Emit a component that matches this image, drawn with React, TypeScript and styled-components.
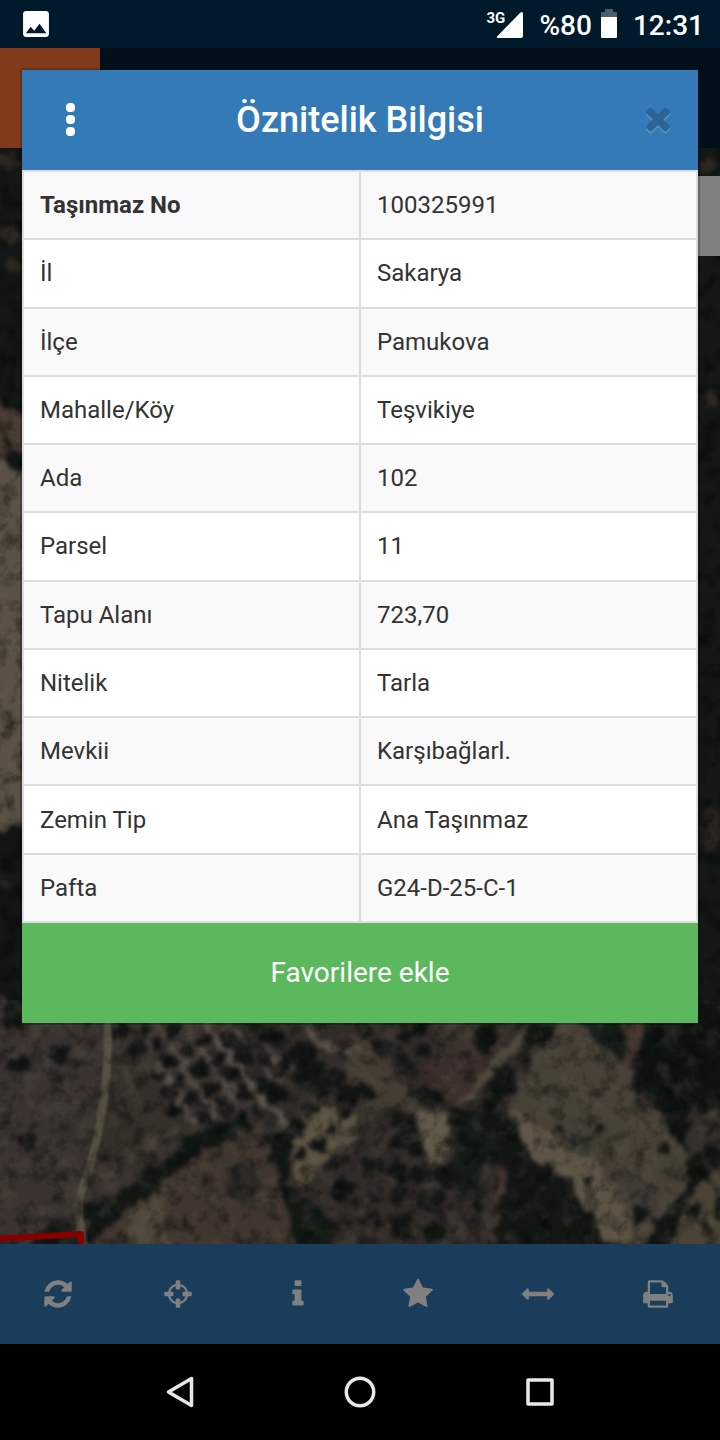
import React from 'react';
import styled, { createGlobalStyle } from 'styled-components';

const GlobalStyle = createGlobalStyle`
  *, *::before, *::after { box-sizing: border-box; }
  body { margin: 0; background: #000; font-family: Roboto, "Noto Sans", sans-serif; color: #333; }
  button { font: inherit; border: 0; padding: 0; background: none; cursor: pointer; }
`;

const Page = styled.div`
  min-height: 100vh;
  display: flex;
  flex-direction: column;
`;

/* ---------- status bar ---------- */

const StatusBar = styled.header`
  height: 48px;
  padding: 0 16px 0 20px;
  display: flex;
  align-items: center;
  justify-content: space-between;
  background: #00192b;
  color: #fff;
`;

const StatusGroup = styled.div`
  display: flex;
  align-items: center;
`;

const StatusText = styled.span`
  font-size: 28px;
  line-height: 32px;
  font-weight: 500;
  padding-top: 3px;
`;

const SignalBox = styled.div`
  position: relative;
  width: 36px;
  height: 28px;
  margin-right: 17px;
  display: flex;
  justify-content: flex-end;
  align-items: flex-end;
`;

const NetworkLabel = styled.span`
  position: absolute;
  left: 0;
  top: 0;
  font-size: 15px;
  line-height: 16px;
  font-weight: 700;
`;

const BatteryIcon = styled.svg`
  margin: 0 16px 2px 9px;
`;

/* ---------- application ---------- */

const Stage = styled.div`
  flex: 1;
  display: grid;
  grid-template-columns: minmax(0, 1fr);
`;

const AppShell = styled.div`
  grid-area: 1 / 1;
  display: flex;
  flex-direction: column;
`;

const AppHeader = styled.div`
  height: 100px;
  background: #000f1a;
`;

const HeaderTile = styled.div`
  width: 100px;
  height: 100px;
  background: #823b1a;
`;

const MapArea = styled.main`
  position: relative;
  flex: 1;
  overflow: hidden;
  background: #141715;
`;

const MapArt = styled.svg`
  position: absolute;
  inset: 0;
  width: 100%;
  height: 100%;
`;

const MapControl = styled.button`
  position: absolute;
  right: 0;
  top: 28px;
  width: 80px;
  height: 80px;
  background: #808080;
`;

const Toolbar = styled.nav`
  height: 100px;
  display: grid;
  grid-template-columns: repeat(6, 1fr);
  background: #1a3d5b;
`;

const ToolButton = styled.button`
  display: flex;
  align-items: center;
  justify-content: center;
  padding-right: 4px;
  color: #808080;
`;

/* ---------- dialog ---------- */

const Dialog = styled.section`
  grid-area: 1 / 1;
  align-self: start;
  position: relative;
  margin: 20px;
  border: 2px solid rgba(0, 0, 0, 0.2);
  background: #fff;
  background-clip: padding-box;
`;

const DialogHeader = styled.header`
  height: 100px;
  padding: 0 22px;
  display: grid;
  grid-template-columns: 52px 1fr 36px;
  align-items: center;
  background: #337ab7;
  color: #fff;
`;

const HeaderButton = styled.button`
  height: 52px;
  display: flex;
  align-items: center;
  justify-content: center;
  color: inherit;
`;

const DialogTitle = styled.h1`
  margin: 0;
  padding-right: 16px;
  font-size: 36px;
  line-height: 40px;
  font-weight: 500;
  text-align: center;
`;

const DataTable = styled.table`
  width: 100%;
  height: 753px;
  table-layout: fixed;
  border-collapse: collapse;
  font-size: 24px;
  line-height: 34px;
`;

const Row = styled.tr`
  background: #fff;
  &:nth-child(odd) { background: #f9f9f9; }
`;

const Label = styled.th<{ $strong?: boolean }>`
  border: 2px solid #ddd;
  padding: 0 16px;
  text-align: left;
  font-weight: ${(p) => (p.$strong ? 700 : 400)};
`;

const Value = styled.td`
  border: 2px solid #ddd;
  padding: 0 16px;
`;

const FavoriteButton = styled.button`
  display: block;
  width: 100%;
  height: 100px;
  background: #5cb85c;
  color: #fff;
  font-size: 28px;
  line-height: 40px;
`;

/* ---------- system navigation ---------- */

const SystemNav = styled.nav`
  height: 96px;
  padding: 0 90px;
  display: grid;
  grid-template-columns: repeat(3, 1fr);
  background: #000;
`;

const SystemButton = styled.button`
  display: flex;
  align-items: center;
  justify-content: center;
`;

/* ---------- data ---------- */

const rows: [string, string][] = [
  ['Taşınmaz No', '100325991'],
  ['İl', 'Sakarya'],
  ['İlçe', 'Pamukova'],
  ['Mahalle/Köy', 'Teşvikiye'],
  ['Ada', '102'],
  ['Parsel', '11'],
  ['Tapu Alanı', '723,70'],
  ['Nitelik', 'Tarla'],
  ['Mevkii', 'Karşıbağlarl.'],
  ['Zemin Tip', 'Ana Taşınmaz'],
  ['Pafta', 'G24-D-25-C-1'],
];

const tools = [
  {
    name: 'Yenile',
    d: 'M1639 1056q0 5-1 7-64 268-268 434.500t-478 166.500q-146 0-282.500-55t-243.500-157l-129 129q-19 19-45 19t-45-19-19-45v-448q0-26 19-45t45-19h448q26 0 45 19t19 45-19 45l-137 137q71 66 161 102t187 36q134 0 250-65t186-179q11-17 53-117 8-23 30-23h192q13 0 22.500 9.500t9.500 22.500zm25-800v448q0 26-19 45t-45 19h-448q-26 0-45-19t-19-45 19-45l138-138q-148-137-349-137-134 0-250 65t-186 179q-11 17-53 117-8 23-30 23h-199q-13 0-22.500-9.500t-9.500-22.500v-7q65-268 270-434.500t480-166.500q146 0 284 55.500t245 156.500l130-129q19-19 45-19t45 19 19 45z',
  },
  {
    name: 'Konum',
    d: 'M1325 1024h-109q-26 0-45-19t-19-45v-128q0-26 19-45t45-19h109q-32-108-112.500-188.500t-188.500-112.500v109q0 26-19 45t-45 19h-128q-26 0-45-19t-19-45v-109q-108 32-188.500 112.500t-112.500 188.500h109q26 0 45 19t19 45v128q0 26-19 45t-45 19h-109q32 108 112.500 188.500t188.500 112.500v-109q0-26 19-45t45-19h128q26 0 45 19t19 45v109q108-32 188.500-112.500t112.500-188.500zm339-192v128q0 26-19 45t-45 19h-143q-37 161-154.500 278.500t-278.500 154.500v143q0 26-19 45t-45 19h-128q-26 0-45-19t-19-45v-143q-161-37-278.500-154.500t-154.500-278.500h-143q-26 0-45-19t-19-45v-128q0-26 19-45t45-19h143q37-161 154.500-278.500t278.500-154.500v-143q0-26 19-45t45-19h128q26 0 45 19t19 45v143q161 37 278.500 154.500t154.500 278.500h143q26 0 45 19t19 45z',
  },
  {
    name: 'Bilgi',
    d: 'M1216 1344v128q0 26-19 45t-45 19h-512q-26 0-45-19t-19-45v-128q0-26 19-45t45-19h64v-384h-64q-26 0-45-19t-19-45v-128q0-26 19-45t45-19h384q26 0 45 19t19 45v576h64q26 0 45 19t19 45zm-128-1152v192q0 26-19 45t-45 19h-256q-26 0-45-19t-19-45v-192q0-26 19-45t45-19h256q26 0 45 19t19 45z',
  },
  {
    name: 'Favoriler',
    d: 'M1728 647q0 22-26 48l-363 354 86 500q1 7 1 20 0 21-10.500 35.500t-30.500 14.500q-19 0-40-12l-449-236-449 236q-22 12-40 12-21 0-31.500-14.500t-10.500-35.500q0-6 2-20l86-500-364-354q-25-27-25-48 0-37 56-46l502-73 225-455q19-41 49-41t49 41l225 455 502 73q56 9 56 46z',
  },
  {
    name: 'Ölçüm',
    d: 'M1792 896q0 26-19 45l-256 256q-19 19-45 19t-45-19-19-45v-128h-1024v128q0 26-19 45t-45 19-45-19l-256-256q-19-19-19-45t19-45l256-256q19-19 45-19t45 19 19 45v128h1024v-128q0-26 19-45t45-19 45 19l256 256q19 19 19 45z',
  },
  {
    name: 'Yazdır',
    d: 'M448 1536h896v-256h-896v256zm0-640h896v-384h-160q-40 0-68-28t-28-68v-160h-640v640zm1152 64q0-26-19-45t-45-19-45 19-19 45 19 45 45 19 45-19 19-45zm128 0v416q0 13-9.500 22.500t-22.500 9.500h-224v160q0 40-28 68t-68 28h-960q-40 0-68-28t-28-68v-160h-224q-13 0-22.500-9.500t-9.500-22.500v-416q0-79 56.500-135.500t135.500-56.500h64v-544q0-40 28-68t68-28h672q40 0 88 20t76 48l152 152q28 28 48 76t20 88v256h64q79 0 135.500 56.500t56.500 135.500z',
  },
];

const closePath =
  'M1490 1322q0 40-28 68l-136 136q-28 28-68 28t-68-28l-294-294-294 294q-28 28-68 28t-68-28l-136-136q-28-28-28-68t28-68l294-294-294-294q-28-28-28-68t28-68l136-136q28-28 68-28t68 28l294 294 294-294q28-28 68-28t68 28l136 136q28 28 28 68t-28 68l-294 294 294 294q28 28 28 68z';

/* tree crowns on the aerial image: x, y, rx, ry */
const trees: number[][] = [
  [12, 1024, 11, 8], [19, 1065, 13, 11], [60, 1055, 10, 9], [29, 1141, 8, 8],
  [120, 1030, 13, 10], [137, 1048, 10, 9], [159, 1077, 7, 7], [168, 1092, 7, 6], [173, 1109, 9, 9],
  [145, 1032, 6, 7], [156, 1044, 7, 7], [168, 1062, 8, 8], [180, 1081, 7, 8], [192, 1099, 8, 8], [203, 1118, 8, 7],
  [172, 1033, 7, 8], [187, 1052, 8, 7], [199, 1070, 9, 8], [211, 1088, 8, 8], [224, 1108, 9, 9],
  [204, 1041, 8, 8], [218, 1058, 9, 7], [231, 1074, 7, 7], [243, 1093, 9, 9], [256, 1109, 5, 5],
  [228, 1038, 8, 8], [245, 1054, 9, 11], [260, 1084, 7, 7], [276, 1095, 11, 9], [283, 1062, 6, 7], [265, 1060, 8, 8],
  [262, 1034, 12, 10], [282, 1040, 10, 10], [305, 1055, 16, 14], [310, 1075, 18, 15], [337, 1080, 9, 8],
  [350, 1095, 13, 11], [325, 1092, 7, 7], [284, 1140, 11, 9], [298, 1127, 9, 9], [318, 1146, 9, 8], [330, 1129, 5, 6],
  [312, 1110, 6, 7], [302, 1156, 5, 5], [345, 1112, 4, 5], [343, 1190, 13, 11], [372, 1165, 13, 9], [330, 1165, 8, 7],
  [398, 1173, 9, 11], [420, 1175, 11, 10], [445, 1175, 12, 11], [375, 1196, 7, 8], [400, 1195, 10, 9], [432, 1200, 13, 11],
  [372, 1220, 10, 9], [403, 1228, 13, 11], [432, 1232, 14, 10], [398, 1145, 9, 7], [415, 1150, 9, 8], [405, 1125, 14, 12],
  [385, 1048, 11, 10], [398, 1058, 9, 9], [412, 1070, 9, 10], [408, 1035, 7, 7], [366, 1092, 6, 8], [367, 1028, 8, 7],
  [420, 1028, 9, 10], [424, 1050, 7, 6], [484, 1040, 12, 15], [540, 1035, 12, 11], [430, 1098, 14, 9], [456, 1115, 9, 9],
  [507, 1077, 11, 11], [499, 1090, 13, 13], [488, 1106, 7, 6], [495, 1122, 12, 14], [508, 1138, 9, 13], [510, 1158, 11, 9],
  [664, 1146, 5, 5], [696, 1165, 11, 13], [715, 1155, 8, 12], [710, 1128, 7, 8], [640, 1215, 8, 9], [663, 1222, 10, 8],
  [695, 1210, 7, 6], [709, 1230, 7, 6], [718, 1208, 6, 10], [600, 1129, 5, 4], [588, 1181, 4, 4], [555, 1086, 3, 3],
  [537, 1076, 3, 3], [528, 1070, 3, 4], [560, 1129, 4, 3],
  [4, 170, 12, 16], [16, 200, 10, 12], [4, 285, 16, 20], [18, 330, 12, 20], [4, 365, 12, 22], [16, 460, 12, 10],
  [4, 443, 3, 3], [10, 850, 16, 24], [14, 920, 14, 34], [2, 970, 8, 24], [14, 1005, 12, 14],
];

const sunlit: number[][] = [
  [8, 160, 14, 8], [10, 235, 12, 10], [14, 266, 9, 7], [706, 165, 8, 8], [712, 400, 6, 8],
  [710, 828, 9, 24], [4, 880, 5, 6],
];

function AerialMap() {
  return (
    <MapArt viewBox="0 148 720 1096" preserveAspectRatio="xMidYMax slice" aria-hidden="true">
      <defs>
        <filter id="organic" x="0" y="0" width="100%" height="100%" colorInterpolationFilters="sRGB">
          <feTurbulence type="fractalNoise" baseFrequency="0.09" numOctaves="3" seed="4" result="n" />
          <feDisplacementMap in="SourceGraphic" in2="n" scale="18" xChannelSelector="R" yChannelSelector="G" />
          <feGaussianBlur stdDeviation="2" />
        </filter>
        <filter id="road" x="-50%" y="-10%" width="200%" height="120%">
          <feGaussianBlur stdDeviation="1.2" />
        </filter>
        <filter id="shade" x="0" y="0" width="100%" height="100%" colorInterpolationFilters="sRGB">
          <feTurbulence type="fractalNoise" baseFrequency="0.06" numOctaves="4" seed="9" />
          <feColorMatrix values="0 0 0 0 0  0 0 0 0 0.01  0 0 0 0 0.01  2.4 0 0 0 -1.1" />
        </filter>
        <filter id="glow" x="0" y="0" width="100%" height="100%" colorInterpolationFilters="sRGB">
          <feTurbulence type="fractalNoise" baseFrequency="0.05" numOctaves="4" seed="21" />
          <feColorMatrix values="0 0 0 0 0.42  0 0 0 0 0.38  0 0 0 0 0.33  2.4 0 0 0 -1.15" />
        </filter>
      </defs>
      <g filter="url(#organic)">
        <rect x="-10" y="140" width="740" height="1120" fill="#131715" />
        <path d="M-10 395L15 410L40 425V830L15 826L-10 838Z" fill="#5b5245" />
        <path d="M-10 395L15 410L40 425V445L-10 460Z" fill="#4a3d33" />
        <path d="M-10 1000H250L300 1130L180 1150L60 1250H-10Z" fill="#3a332f" />
        <path d="M110 1045L150 1080L195 1130L92 1185Z" fill="#352f29" />
        <path d="M235 1010H300L295 1130L255 1125Z" fill="#2a2825" />
        <path d="M85 1250L150 1190L200 1155L262 1118L280 1180L296 1250Z" fill="#40362f" />
        <path d="M135 1200L160 1198L168 1244H128Z" fill="#50483a" />
        <ellipse cx="243" cy="1182" rx="15" ry="20" fill="#2a2925" />
        <path d="M290 1010H560L500 1140L490 1250H290Z" fill="#322c28" />
        <path d="M355 1030L385 1060L425 1110L450 1150L430 1160L400 1110L345 1100L350 1060Z" fill="#453d33" />
        <path d="M310 1102L340 1106L358 1118L352 1136L326 1160L312 1182L296 1178L293 1140Z" fill="#5d5443" />
        <path d="M418 1062L490 1052L462 1104L445 1098L425 1085Z" fill="#3b2e2b" />
        <path d="M440 1015H525L492 1048L440 1052Z" fill="#3b332d" />
        <path d="M530 1028L500 1060L458 1108" stroke="#514a3d" strokeWidth="8" fill="none" />
        <path d="M420 1112L452 1116L448 1148L436 1164L424 1148Z" fill="#625a49" />
        <path d="M500 1160L520 1244H490Z" fill="#44332c" />
        <path d="M508 1105L535 1055L562 1015L580 1020L632 1075L685 1150L692 1178L664 1215L640 1250L600 1238L585 1205L565 1175L530 1158L518 1130Z" fill="#484137" />
        <path d="M508 1108L540 1128L565 1140L600 1165L632 1225L636 1244L604 1238L565 1175L530 1158Z" fill="#5e5445" />
        <ellipse cx="585" cy="1136" rx="27" ry="20" fill="#3e3e33" />
        <path d="M600 1160L660 1190L655 1215L635 1210Z" fill="#403a34" />
        <path d="M622 1020H652L640 1062L620 1070Z" fill="#45362f" />
        <path d="M636 1060L652 1000H730V1125L684 1148L660 1112L634 1085Z" fill="#0f1412" />
        <path d="M580 1015L622 1020L628 1060L600 1048Z" fill="#141b17" />
        <path d="M522 1165L562 1172L600 1234L612 1250H496L500 1195Z" fill="#121614" />
        <path d="M456 1110L495 1110L520 1165L480 1165L478 1215L450 1180Z" fill="#151b17" />
        <path d="M690 1110H730V1200L684 1150Z" fill="#35302a" />
        <path d="M690 1190L730 1170V1250H670Z" fill="#4b4436" />
        <g stroke="#5e554b" strokeWidth="4" fill="none">
          <path d="M137 1026L163 1070L194 1126" />
          <path d="M155 1020L185 1068L219 1120" />
          <path d="M180 1020L212 1064L240 1104" strokeWidth="5" />
          <path d="M205 1024L236 1066L262 1098L294 1130" strokeWidth="6" />
          <path d="M227 1020L250 1050L280 1086" strokeWidth="4" />
          <path d="M250 1030L292 1075" strokeWidth="3" />
          <path d="M300 1022L325 1047L358 1052" />
        </g>
        <path d="M95 1180L155 1142L180 1130" stroke="#4f463d" strokeWidth="2" fill="none" />
        <path d="M112 1050L142 1105" stroke="#4b443a" strokeWidth="2" fill="none" />
        <g fill="#121514">
          {trees.map(([x, y, rx, ry], i) => (
            <ellipse key={i} cx={x} cy={y} rx={rx} ry={ry} />
          ))}
        </g>
        <g fill="#2d2721">
          {sunlit.map(([x, y, rx, ry], i) => (
            <ellipse key={i} cx={x} cy={y} rx={rx} ry={ry} />
          ))}
        </g>
        <path d="M180 1140L215 1125L245 1112L250 1128L215 1148L185 1160Z" fill="#0f1612" />
        <path d="M82 1208L110 1196L135 1180L150 1164L162 1170L155 1195L120 1205L90 1222Z" fill="#121713" />
        <path d="M284 1195L320 1205L336 1225L332 1250H296Z" fill="#121914" />
        <path d="M36 1232L55 1220L74 1222L74 1250H30Z" fill="#171b17" />
      </g>
      <path d="M107 1020Q110 1060 103 1105T86 1178Q78 1198 78 1212L84 1246" stroke="#5a5346" strokeWidth="8" fill="none" opacity="0.9" filter="url(#road)" />
      <rect y="148" width="720" height="1096" filter="url(#shade)" opacity="0.5" />
      <rect y="1000" width="720" height="244" filter="url(#glow)" opacity="0.3" />
      <path d="M-4 1239L81 1234V1250" stroke="#860000" strokeWidth="6" strokeLinejoin="round" fill="none" />
    </MapArt>
  );
}

export default function App() {
  return (
    <Page>
      <GlobalStyle />
      <StatusBar>
        <svg width="32" height="32" viewBox="0 0 24 24" fill="#fff" aria-hidden="true">
          <path d="M21.700 19.500v-15c0-1.200-.9-2.200-2.200-2.200h-15c-1.200 0-2.200.9-2.200 2.200v15c0 1.200.9 2.200 2.200 2.200h15c1.200 0 2.200-.9 2.200-2.200zM8 14.100l2.600 3 4-5.200 5.200 7h-15.400z" />
        </svg>
        <StatusGroup>
          <SignalBox>
            <svg width="27" height="27" viewBox="0 0 27 27" fill="#fff" aria-hidden="true">
              <path d="M1 25.500L24.500 1.500Q27 0 27 3V25Q27 27 25 27H2Q0 27 1 25.500Z" />
            </svg>
            <NetworkLabel>3G</NetworkLabel>
          </SignalBox>
          <StatusText>%80</StatusText>
          <BatteryIcon width="16" height="29" viewBox="0 0 16 29" aria-hidden="true">
            <path d="M4 0H12V3H15Q16 3 16 4V9H0V4Q0 3 1 3H4Z" fill="#4d5e6b" />
            <path d="M0 8H16V28Q16 29 15 29H1Q0 29 0 28Z" fill="#fff" />
          </BatteryIcon>
          <StatusText>12:31</StatusText>
        </StatusGroup>
      </StatusBar>

      <Stage>
        <AppShell>
          <AppHeader>
            <HeaderTile />
          </AppHeader>
          <MapArea>
            <AerialMap />
            <MapControl aria-label="Katmanlar" />
          </MapArea>
          <Toolbar>
            {tools.map((t) => (
              <ToolButton key={t.name} aria-label={t.name}>
                <svg width="32" height="32" viewBox="0 0 1792 1792" fill="currentColor" aria-hidden="true">
                  <path d={t.d} />
                </svg>
              </ToolButton>
            ))}
          </Toolbar>
        </AppShell>

        <Dialog role="dialog" aria-labelledby="dialog-title">
          <DialogHeader>
            <HeaderButton aria-label="Menü">
              <svg width="10" height="34" viewBox="0 0 10 34" fill="currentColor" aria-hidden="true">
                <rect x="1" y="0" width="9" height="9" rx="4" />
                <rect x="1" y="12" width="9" height="9" rx="4" />
                <rect x="1" y="24" width="9" height="9" rx="4" />
              </svg>
            </HeaderButton>
            <DialogTitle id="dialog-title">Öznitelik Bilgisi</DialogTitle>
            <HeaderButton aria-label="Kapat">
              <svg width="36" height="36" viewBox="0 84 1792 1792" aria-hidden="true">
                <path d={closePath} fill="#5c95c5" transform="translate(0 100)" />
                <path d={closePath} fill="#2b6597" />
              </svg>
            </HeaderButton>
          </DialogHeader>
          <DataTable>
            <tbody>
              {rows.map(([label, value], i) => (
                <Row key={label}>
                  <Label scope="row" $strong={i === 0}>{label}</Label>
                  <Value>{value}</Value>
                </Row>
              ))}
            </tbody>
          </DataTable>
          <FavoriteButton>Favorilere ekle</FavoriteButton>
        </Dialog>
      </Stage>

      <SystemNav>
        <SystemButton aria-label="Geri">
          <svg width="32" height="32" viewBox="0 0 32 32" fill="none" stroke="#e8e8e8" strokeWidth="3.500" strokeLinejoin="round" aria-hidden="true">
            <path d="M27.500 2.500V29.500L4.500 16Z" />
          </svg>
        </SystemButton>
        <SystemButton aria-label="Ana ekran">
          <svg width="32" height="32" viewBox="0 0 32 32" fill="none" stroke="#e8e8e8" strokeWidth="3.500" aria-hidden="true">
            <circle cx="16" cy="16" r="13.700" />
          </svg>
        </SystemButton>
        <SystemButton aria-label="Son uygulamalar">
          <svg width="32" height="32" viewBox="0 0 32 32" fill="none" stroke="#e8e8e8" strokeWidth="3.500" strokeLinejoin="round" aria-hidden="true">
            <rect x="4" y="4" width="24" height="24" />
          </svg>
        </SystemButton>
      </SystemNav>
    </Page>
  );
}
